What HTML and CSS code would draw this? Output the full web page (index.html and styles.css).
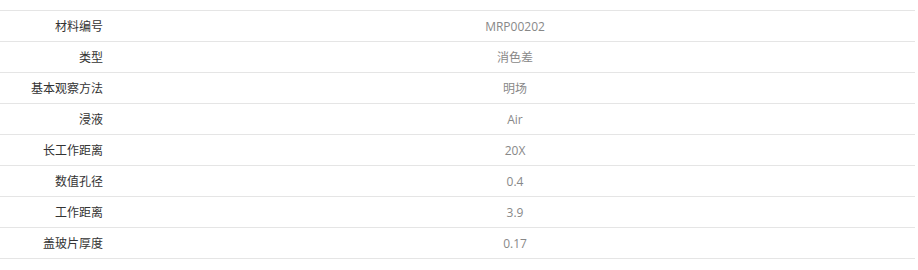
FILE: index.html
```html
<!DOCTYPE html>
<html>
<head>
<meta charset="utf-8">
<link rel="stylesheet" href="styles.css">
</head>
<body>
<div class="spec">
  <div class="row"><div class="label">材料编号</div><div class="value">MRP00202</div></div>
  <div class="row"><div class="label">类型</div><div class="value">消色差</div></div>
  <div class="row"><div class="label">基本观察方法</div><div class="value">明场</div></div>
  <div class="row"><div class="label">浸液</div><div class="value">Air</div></div>
  <div class="row"><div class="label">长工作距离</div><div class="value">20X</div></div>
  <div class="row"><div class="label">数值孔径</div><div class="value">0.4</div></div>
  <div class="row"><div class="label">工作距离</div><div class="value">3.9</div></div>
  <div class="row"><div class="label">盖玻片厚度</div><div class="value">0.17</div></div>
</div>
</body>
</html>
```
FILE: styles.css
```css
html, body {
  margin: 0;
  padding: 0;
  background: #fff;
}
body {
  padding-top: 10px;
  font-family: "Open Sans", "Noto Sans CJK SC", sans-serif;
  font-size: 12px;
}
.spec {
  width: 915px;
  border-bottom: 1px solid #e5e5e5;
}
.row {
  display: flex;
  height: 30px;
  align-items: center;
  border-top: 1px solid #e5e5e5;
}
.label {
  width: 103px;
  padding-right: 10px;
  text-align: right;
  color: #333;
}
.value {
  flex: 1;
  padding-left: 2px;
  text-align: center;
  color: #888;
}
```
